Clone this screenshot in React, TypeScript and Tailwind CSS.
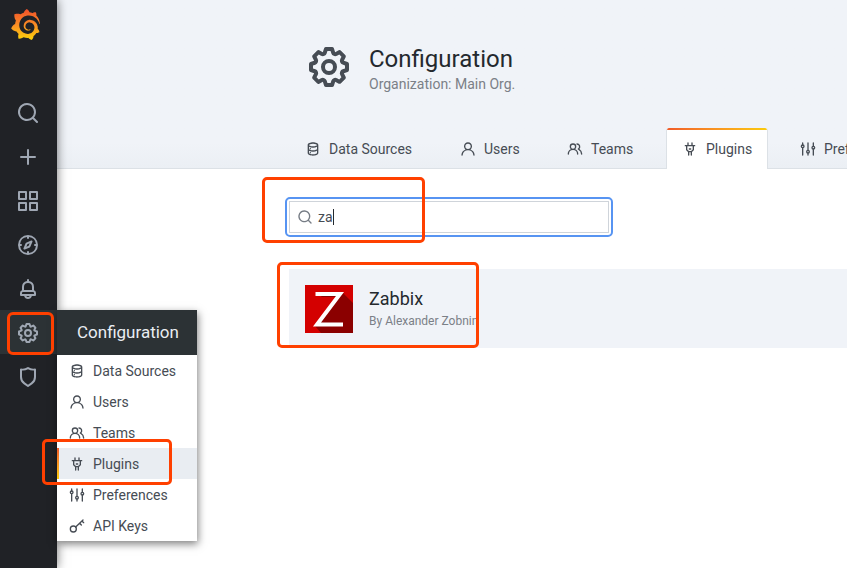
import type { ReactNode } from "react";
import { SiGrafana } from "react-icons/si";

const paths = {
  search:
    "M21.71,20.29,18,16.61A9,9,0,1,0,16.61,18l3.68,3.68a1,1,0,0,0,1.42,0A1,1,0,0,0,21.71,20.29ZM11,18a7,7,0,1,1,7-7A7,7,0,0,1,11,18Z",
  plus: "M19,11H13V5a1,1,0,0,0-2,0v6H5a1,1,0,0,0,0,2h6v6a1,1,0,0,0,2,0V13h6a1,1,0,0,0,0-2Z",
  apps: "M10,13H3a1,1,0,0,0-1,1v7a1,1,0,0,0,1,1h7a1,1,0,0,0,1-1V14A1,1,0,0,0,10,13ZM9,20H4V15H9ZM21,2H14a1,1,0,0,0-1,1v7a1,1,0,0,0,1,1h7a1,1,0,0,0,1-1V3A1,1,0,0,0,21,2ZM20,9H15V4h5Zm1,4H14a1,1,0,0,0-1,1v7a1,1,0,0,0,1,1h7a1,1,0,0,0,1-1V14A1,1,0,0,0,21,13Zm-1,7H15V15h5ZM10,2H3A1,1,0,0,0,2,3v7a1,1,0,0,0,1,1h7a1,1,0,0,0,1-1V3A1,1,0,0,0,10,2ZM9,9H4V4H9Z",
  compass:
    "M12,2A10,10,0,1,0,22,12,10,10,0,0,0,12,2Zm1,17.93V19a1,1,0,0,0-2,0v.93A8,8,0,0,1,4.07,13H5a1,1,0,0,0,0-2H4.07A8,8,0,0,1,11,4.07V5a1,1,0,0,0,2,0V4.07A8,8,0,0,1,19.93,11H19a1,1,0,0,0,0,2h.93A8,8,0,0,1,13,19.93ZM15.14,7.55l-5,2.12a1,1,0,0,0-.52.52l-2.12,5a1,1,0,0,0,.21,1.1,1,1,0,0,0,.7.29.93.93,0,0,0,.4-.08l5-2.12a1,1,0,0,0,.52-.52l2.12-5a1,1,0,0,0-1.31-1.31Zm-2.49,5.1-2.28,1,1-2.28,2.28-1Z",
  bell: "M18,13.18V10a6,6,0,0,0-5-5.91V3a1,1,0,0,0-2,0V4.09A6,6,0,0,0,6,10v3.18A3,3,0,0,0,4,16v2a1,1,0,0,0,1,1H8.14a4,4,0,0,0,7.72,0H19a1,1,0,0,0,1-1V16A3,3,0,0,0,18,13.18ZM8,10a4,4,0,0,1,8,0v3H8Zm4,10a2,2,0,0,1-1.72-1h3.44A2,2,0,0,1,12,20Zm6-3H6V16a1,1,0,0,1,1-1H17a1,1,0,0,1,1,1Z",
  cog: "M21.32,9.55l-1.89-.63.89-1.78A1,1,0,0,0,20.13,6L18,3.87a1,1,0,0,0-1.15-.19l-1.78.89-.63-1.89A1,1,0,0,0,13.5,2h-3a1,1,0,0,0-.95.68L8.92,4.57,7.14,3.68A1,1,0,0,0,6,3.87L3.87,6a1,1,0,0,0-.19,1.15l.89,1.78-1.89.63A1,1,0,0,0,2,10.5v3a1,1,0,0,0,.68.95l1.89.63-.89,1.78A1,1,0,0,0,3.87,18L6,20.13a1,1,0,0,0,1.15.19l1.78-.89.63,1.89a1,1,0,0,0,.95.68h3a1,1,0,0,0,.95-.68l.63-1.89,1.78.89A1,1,0,0,0,18,20.13L20.13,18a1,1,0,0,0,.19-1.15l-.89-1.78,1.89-.63A1,1,0,0,0,22,13.5v-3A1,1,0,0,0,21.32,9.55ZM20,12.78l-1.2.4A2,2,0,0,0,17.64,16l.57,1.14-1.1,1.1L16,17.64a2,2,0,0,0-2.79,1.16l-.4,1.2H11.22l-.4-1.2A2,2,0,0,0,8,17.64l-1.14.57-1.1-1.1L6.36,16A2,2,0,0,0,5.2,13.18L4,12.78V11.22l1.2-.4A2,2,0,0,0,6.36,8L5.79,6.89l1.1-1.1L8,6.36A2,2,0,0,0,10.82,5.2l.4-1.2h1.56l.4,1.2A2,2,0,0,0,16,6.36l1.14-.57,1.1,1.1L17.64,8a2,2,0,0,0,1.16,2.79l1.2.4ZM12,8a4,4,0,1,0,4,4A4,4,0,0,0,12,8Zm0,6a2,2,0,1,1,2-2A2,2,0,0,1,12,14Z",
  shield:
    "M19.63,3.65a1,1,0,0,0-.84-.2,8,8,0,0,1-6.22-1.27,1,1,0,0,0-1.14,0A8,8,0,0,1,5.21,3.45a1,1,0,0,0-.84.2A1,1,0,0,0,4,4.43v7.45a9,9,0,0,0,3.77,7.33l3.65,2.6a1,1,0,0,0,1.16,0l3.65-2.6A9,9,0,0,0,20,11.88V4.43A1,1,0,0,0,19.63,3.65ZM18,11.88a7,7,0,0,1-2.93,5.7L12,19.77,8.93,17.58A7,7,0,0,1,6,11.88V5.58a10,10,0,0,0,6-1.39,10,10,0,0,0,6,1.39Z",
  database:
    "M8,16.5a1,1,0,1,0,1,1A1,1,0,0,0,8,16.5ZM12,2C8,2,4,3.37,4,6V18c0,2.63,4,4,8,4s8-1.37,8-4V6C20,3.37,16,2,12,2Zm6,16c0,.71-2.28,2-6,2s-6-1.29-6-2V14.73A13.16,13.16,0,0,0,12,16a13.16,13.16,0,0,0,6-1.27Zm0-6c0,.71-2.28,2-6,2s-6-1.29-6-2V8.73A13.16,13.16,0,0,0,12,10a13.16,13.16,0,0,0,6-1.27ZM12,8C8.28,8,6,6.71,6,6s2.28-2,6-2,6,1.29,6,2S15.72,8,12,8ZM8,10.5a1,1,0,1,0,1,1A1,1,0,0,0,8,10.5Z",
  user: "M15.71,12.71a6,6,0,1,0-7.42,0,10,10,0,0,0-6.22,8.18,1,1,0,0,0,2,.22,8,8,0,0,1,15.9,0,1,1,0,0,0,1,.89h.11a1,1,0,0,0,.88-1.1A10,10,0,0,0,15.71,12.71ZM12,12a4,4,0,1,1,4-4A4,4,0,0,1,12,12Z",
  users:
    "M12.3,12.22A4.92,4.92,0,0,0,14,8.5a5,5,0,0,0-10,0,4.92,4.92,0,0,0,1.7,3.72A8,8,0,0,0,1,19.5a1,1,0,0,0,2,0,6,6,0,0,1,12,0,1,1,0,0,0,2,0A8,8,0,0,0,12.3,12.22ZM9,11.5a3,3,0,1,1,3-3A3,3,0,0,1,9,11.5Zm9.74.32A5,5,0,0,0,15,3.5a1,1,0,0,0,0,2,3,3,0,0,1,3,3,3,3,0,0,1-1.5,2.59,1,1,0,0,0-.5.84,1,1,0,0,0,.45.86l.39.26.13.07a7,7,0,0,1,4,6.38,1,1,0,0,0,2,0A9,9,0,0,0,18.74,11.82Z",
  plug: "M19,6H16V3a1,1,0,0,0-2,0V6H10V3A1,1,0,0,0,8,3V6H5A1,1,0,0,0,5,8H6v5a1,1,0,0,0,.29.71L9,16.41V21a1,1,0,0,0,2,0V17h2v4a1,1,0,0,0,2,0V16.41l2.71-2.7A1,1,0,0,0,18,13V8h1a1,1,0,0,0,0-2Zm-3,6.59L13.59,15H10.41L8,12.59V8h8ZM11,13h2a1,1,0,0,0,0-2H11a1,1,0,0,0,0,2Z",
};

type IconName = keyof typeof paths | "sliders" | "key";

function Icon({ name, className = "size-4" }: { name: IconName; className?: string }) {
  const base = `shrink-0 ${className}`;
  if (name === "sliders" || name === "key") {
    return (
      <svg viewBox="0 0 24 24" className={base} fill="none" stroke="currentColor" strokeWidth="2" strokeLinecap="round">
        {name === "sliders" ? (
          <>
            <path d="M4 3v3M4 10v11M12 3v11M12 18v3M20 3v5M20 12v9" />
            <circle cx="4" cy="8" r="2" />
            <circle cx="12" cy="16" r="2" />
            <circle cx="20" cy="10" r="2" />
          </>
        ) : (
          <>
            <circle cx="6.5" cy="16.5" r="4.5" />
            <path d="M10 13.500 21 3M16 8l2.500 2.500M19.500 4.500 22 7" />
          </>
        )}
      </svg>
    );
  }
  return (
    <svg viewBox="0 0 24 24" className={base} fill="currentColor">
      <path d={paths[name]} />
    </svg>
  );
}

const sections: { label: string; icon: IconName }[] = [
  { label: "Data Sources", icon: "database" },
  { label: "Users", icon: "user" },
  { label: "Teams", icon: "users" },
  { label: "Plugins", icon: "plug" },
  { label: "Preferences", icon: "sliders" },
  { label: "API Keys", icon: "key" },
];

function Sidebar() {
  const items: IconName[] = ["search", "plus", "apps", "compass", "bell", "cog", "shield"];
  return (
    <nav className="relative z-10 flex w-[57px] shrink-0 flex-col bg-[#202226] text-[#9fa7b3] shadow-[0_0_10px_rgba(0,0,0,0.55)]">
      <svg className="absolute size-0">
        <defs>
          <linearGradient id="flame" x1="0" y1="1" x2="0" y2="0">
            <stop offset="0" stopColor="#fcd40a" />
            <stop offset="0.5" stopColor="#f98b25" />
            <stop offset="1" stopColor="#f0502b" />
          </linearGradient>
        </defs>
      </svg>
      <div className="flex h-[90px] items-start pt-[9px] pl-[10px]">
        <SiGrafana className="size-[31px]" fill="url(#flame)" />
      </div>
      {items.map((name) => (
        <div
          key={name}
          className={`flex h-11 items-center pt-px pl-4 ${name === "cog" ? "bg-[#2c3235]" : ""}`}
        >
          <Icon name={name} className="size-6" />
        </div>
      ))}
    </nav>
  );
}

function Flyout() {
  return (
    <div className="absolute top-[310px] left-[57px] z-20 w-[140px] bg-white shadow-[1px_3px_8px_rgba(0,0,0,0.5)]">
      <div className="flex h-[45px] items-center bg-[#2c3235] pl-5 text-[17px] whitespace-nowrap text-[#e9edf2]">
        Configuration
      </div>
      {sections.map(({ label, icon }) => (
        <div
          key={label}
          className={`flex h-[31px] items-center gap-2 pl-3 text-sm text-[#464c54] ${
            label === "Plugins" ? "bg-[#e9edf2]" : ""
          }`}
        >
          {label === "Plugins" && (
            <span className="mr-0.5 -ml-3 h-full w-0.5 bg-linear-to-b from-[#f05a28] to-[#fbca0a]" />
          )}
          <Icon name={icon} />
          <span>{label}</span>
        </div>
      ))}
    </div>
  );
}

function Tab({ icon, active, children, className }: { icon: IconName; active?: boolean; children: ReactNode; className: string }) {
  return (
    <div
      className={`relative flex h-[41px] shrink-0 items-center gap-2 overflow-hidden whitespace-nowrap ${className} ${
        active ? "rounded-t-[3px] border-x border-[#dce1e6] bg-white" : ""
      }`}
    >
      {active && <span className="absolute inset-x-0 top-0 h-0.5 bg-linear-to-r from-[#f05a28] to-[#fbca0a]" />}
      <Icon name={icon} />
      <span className="pt-px">{children}</span>
    </div>
  );
}

function Frame({ className }: { className: string }) {
  return <div className={`absolute z-30 border-[3px] border-[#ff4000] ${className}`} />;
}

export default function App() {
  return (
    <div className="relative flex h-[568px] w-[847px] overflow-hidden bg-white font-[Roboto,'Liberation_Sans',sans-serif]">
      <Sidebar />
      <main className="flex min-w-0 flex-1 flex-col">
        <header className="flex h-[169px] flex-col justify-between border-b border-[#dce1e6] bg-linear-to-b from-[#f0f3f8] from-85% to-[#ebeff4]">
          <div className="flex gap-4 pt-[43px] pl-[248px]">
            <Icon name="cog" className="size-12 text-[#464c54]" />
            <div>
              <h1 className="text-2xl leading-8 text-[#24292e]">Configuration</h1>
              <p className="text-sm leading-[18px] text-[#7b8087]">Organization: Main Org.</p>
            </div>
          </div>
          <div className="-mb-px flex pl-[248px] text-sm text-[#464c54]">
            <Tab icon="database" className="w-[155px]">Data Sources</Tab>
            <Tab icon="user" className="w-[107px]">Users</Tab>
            <Tab icon="users" className="w-[99px]">Teams</Tab>
            <Tab icon="plug" active className="w-[102px] pl-[15px]">Plugins</Tab>
            <Tab icon="sliders" className="pl-8">Preferences</Tab>
          </div>
        </header>
        <section className="flex flex-col pt-7 pl-[228px]">
          <div className="flex h-10 w-[328px] rounded-[5px] border-2 border-[#5794f2] p-0.5">
            <div className="flex flex-1 items-center gap-[5px] border border-[#cfd4da] pl-[7px] text-[#464c54]">
              <Icon name="search" className="mb-px size-4 text-[#767c85]" />
              <span className="flex items-center text-sm">
                za
                <span className="h-4 w-px bg-[#24292e]" />
              </span>
            </div>
          </div>
          <div className="mt-8 ml-[4px] flex h-[79px] items-center gap-4 bg-[#f0f3f8] pl-4">
            <svg viewBox="0 0 48 48" className="size-12">
              <path fill="#d40000" d="M0 0h48v48H0z" />
              <path fill="#8b0000" d="M37 7 48 18v30H16L10 41 31 12H17L11 7Z" />
              <path fill="none" stroke="#fff" strokeWidth="4" d="M10.500 9H35L12 39.500H38" />
            </svg>
            <div className="w-[108px] overflow-hidden whitespace-nowrap">
              <div className="text-lg leading-6 text-[#24292e]">Zabbix</div>
              <div className="text-xs leading-5 text-[#7b8087]">By Alexander Zobnin</div>
            </div>
          </div>
        </section>
      </main>
      <Flyout />
      <Frame className="top-[177px] left-[262px] h-[66px] w-[163px] rounded-[5px]" />
      <Frame className="top-[262px] left-[277px] h-[86px] w-[202px] rounded-[5px]" />
      <Frame className="top-[312px] left-[7px] h-[43px] w-[47px] rounded-[6px]" />
      <Frame className="top-[439px] left-[42px] h-[46px] w-[130px] rounded-[5px]" />
    </div>
  );
}
